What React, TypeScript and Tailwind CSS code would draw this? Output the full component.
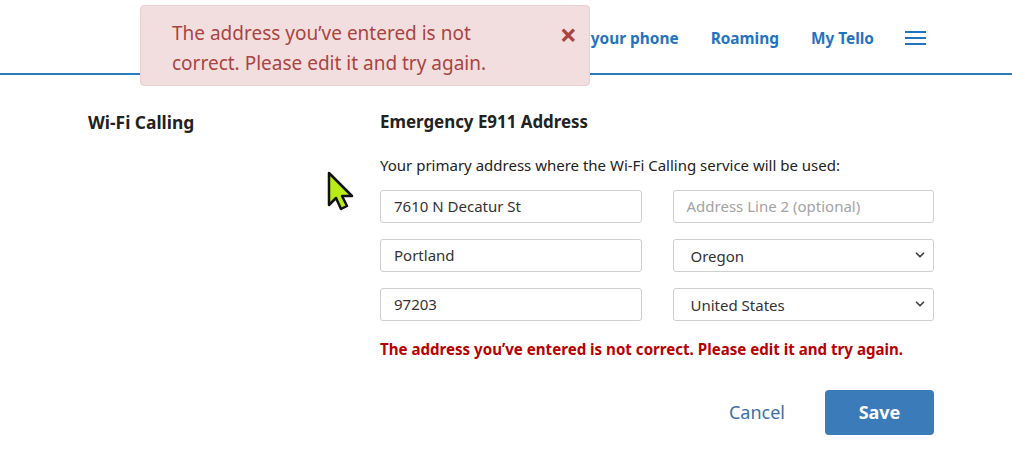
import { ChevronDown } from "lucide-react";

const font = { fontFamily: '"Noto Sans", "Open Sans", sans-serif' };

function Field({ value, placeholder }: { value?: string; placeholder?: string }) {
  return (
    <div className="flex h-[33px] items-center rounded-[3px] border border-[#cfcfcf] bg-white px-[13px] text-[15px]">
      {value ? (
        <span className="text-[#333]">{value}</span>
      ) : (
        <span className="text-[15px] text-[#a3a3a3]">{placeholder}</span>
      )}
    </div>
  );
}

function SelectBox({ value }: { value: string }) {
  return (
    <div className="flex h-[33px] items-center justify-between rounded-[3px] border border-[#cfcfcf] bg-white pl-[17px] pr-[6px] text-[15px] text-[#333]">
      <span className="pt-[2px]">{value}</span>
      <ChevronDown className="h-3.5 w-3.5 text-[#444]" strokeWidth={3} />
    </div>
  );
}

export default function App() {
  return (
    <div className="relative h-[453px] w-[1012px] overflow-hidden bg-white" style={font}>
      <header className="flex h-[75px] items-center justify-end border-b-2 border-[#2a7ac4] pr-[86px]">
        <nav className="flex items-center gap-8 pt-[4px] text-[15.4px] font-bold text-[#1f74c2]">
          <a>your phone</a>
          <a>Roaming</a>
          <a>My Tello</a>
          <div className="ml-[-1px] flex w-[21px] flex-col gap-[4px]">
            <span className="h-[2px] bg-[#1f74c2]" />
            <span className="h-[2px] bg-[#1f74c2]" />
            <span className="h-[2px] bg-[#1f74c2]" />
          </div>
        </nav>
      </header>

      <main className="flex pl-[88px] pt-[34px]">
        <div className="w-[292px] shrink-0">
          <h2 className="text-[17.4px] font-bold text-[#222]">Wi-Fi Calling</h2>
        </div>
        <div className="w-[554px] shrink-0">
          <h2 className="text-[16.9px] font-bold text-[#222]">Emergency E911 Address</h2>
          <p className="mt-[20px] text-[15px] text-[#222]">
            Your primary address where the Wi-Fi Calling service will be used:
          </p>
          <div className="mt-[13px] grid grid-cols-2 gap-x-[31px] gap-y-[16px]">
            <Field value="7610 N Decatur St" />
            <Field placeholder="Address Line 2 (optional)" />
            <Field value="Portland" />
            <SelectBox value="Oregon" />
            <Field value="97203" />
            <SelectBox value="United States" />
          </div>
          <p className="mt-[17px] text-[15.1px] font-bold text-[#b80000]">
            The address you’ve entered is not correct. Please edit it and try again.
          </p>
          <div className="mt-[29px] flex items-center justify-end gap-10">
            <button type="button" className="text-[18px] text-[#3d6fa6]">
              Cancel
            </button>
            <button
              type="button"
              className="h-[45px] w-[109px] rounded-[4px] bg-[#3b7bb9] text-[18px] font-bold text-white"
            >
              Save
            </button>
          </div>
        </div>
      </main>

      <div className="absolute left-[140px] top-[5px] flex h-[81px] w-[450px] items-start justify-between rounded-[4px] border border-[#ebcfd2] bg-[#f2dede] pl-[31px] pr-[12px] pt-[12px]">
        <p className="text-[19px] leading-[30px] text-[#a94442]">
          The address you’ve entered is not
          <br />
          correct. Please edit it and try again.
        </p>
        <span className="mt-[2px] text-[30px] font-bold leading-[30px] text-[#a94442]">×</span>
      </div>

      <svg className="absolute left-[327px] top-[171px]" width="30" height="42" viewBox="0 0 30 42">
        <path
          d="M2 2 L2 34 L9 27 L14 38 L20 35 L15 25 L25 25 Z"
          fill="#b9ec13"
          stroke="#111"
          strokeWidth="2.5"
          strokeLinejoin="round"
        />
      </svg>
    </div>
  );
}
